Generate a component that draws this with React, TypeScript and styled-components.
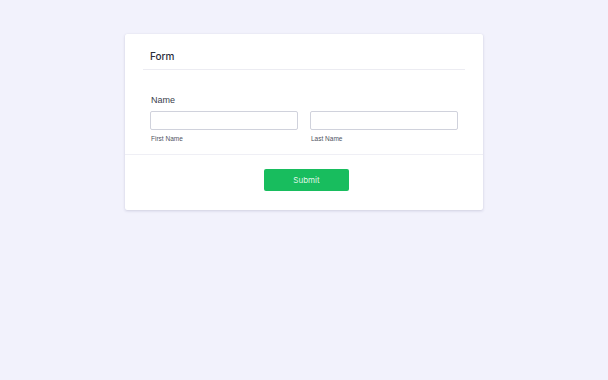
import React from 'react';
import styled, { createGlobalStyle } from 'styled-components';

const GlobalStyle = createGlobalStyle`
    html, body {
        margin: 0;
        padding: 0;
        background: #f2f2fc;
        font-family: Inter, "Noto Sans", sans-serif;
    }
    * {
        box-sizing: border-box;
    }
`

const Page = styled.main`
    min-height: 380px;
    padding-top: 34px;
`

const Card = styled.form`
    width: 358px;
    margin: 0 auto;
    background: #ffffff;
    border-radius: 2px;
    box-shadow: 0 1px 3px rgba(60, 60, 110, 0.18), 0 0 1px rgba(60, 60, 110, 0.08);
`

const Header = styled.header`
    padding: 13px 18px 0;
`

const Title = styled.h2`
    margin: 0;
    padding: 0 7px 4px;
    font-size: 10px;
    line-height: 18px;
    font-weight: 500;
    color: #2b2e3a;
    border-bottom: 1px solid #ececf2;
`

const Body = styled.section`
    padding: 24px 25px 10px;
    border-bottom: 1px solid #efeff5;
`

const FieldLabel = styled.label`
    display: block;
    margin: 0 0 5px 1px;
    font-family: "Liberation Sans", Arial, sans-serif;
    font-size: 9px;
    line-height: 12px;
    font-weight: 400;
    color: #3a3d4a;
`

const Row = styled.div`
    display: grid;
    grid-template-columns: 1fr 1fr;
    gap: 12px;
`

const Field = styled.div`
    display: flex;
    flex-direction: column;
`

const Input = styled.input`
    display: block;
    width: 100%;
    height: 19px;
    margin: 0;
    padding: 0 5px;
    border: 1px solid #d0d2dc;
    border-radius: 2px;
    background: #fff;
    font-family: inherit;
    font-size: 8px;
    outline: none;
`

const SubLabel = styled.span`
    margin: 4px 0 0 1px;
    font-family: "Liberation Sans", Arial, sans-serif;
    font-size: 6.5px;
    line-height: 10px;
    color: #50535f;
`

const Footer = styled.footer`
    display: flex;
    justify-content: center;
    padding: 14px 0 19px 5px;
`

const SubmitButton = styled.button`
    width: 85px;
    height: 22px;
    border: 0;
    border-radius: 2px;
    background: #18bd5e;
    color: rgba(255, 255, 255, 0.88);
    font-family: inherit;
    font-size: 8px;
    cursor: pointer;
`

export default function App(): JSX.Element {
    return (
        <>
            <GlobalStyle />
            <Page>
                <Card onSubmit={e => e.preventDefault()}>
                    <Header>
                        <Title>Form</Title>
                    </Header>
                    <Body>
                        <FieldLabel>Name</FieldLabel>
                        <Row>
                            <Field>
                                <Input type="text" />
                                <SubLabel>First Name</SubLabel>
                            </Field>
                            <Field>
                                <Input type="text" />
                                <SubLabel>Last Name</SubLabel>
                            </Field>
                        </Row>
                    </Body>
                    <Footer>
                        <SubmitButton type="submit">Submit</SubmitButton>
                    </Footer>
                </Card>
            </Page>
        </>
    );
}
